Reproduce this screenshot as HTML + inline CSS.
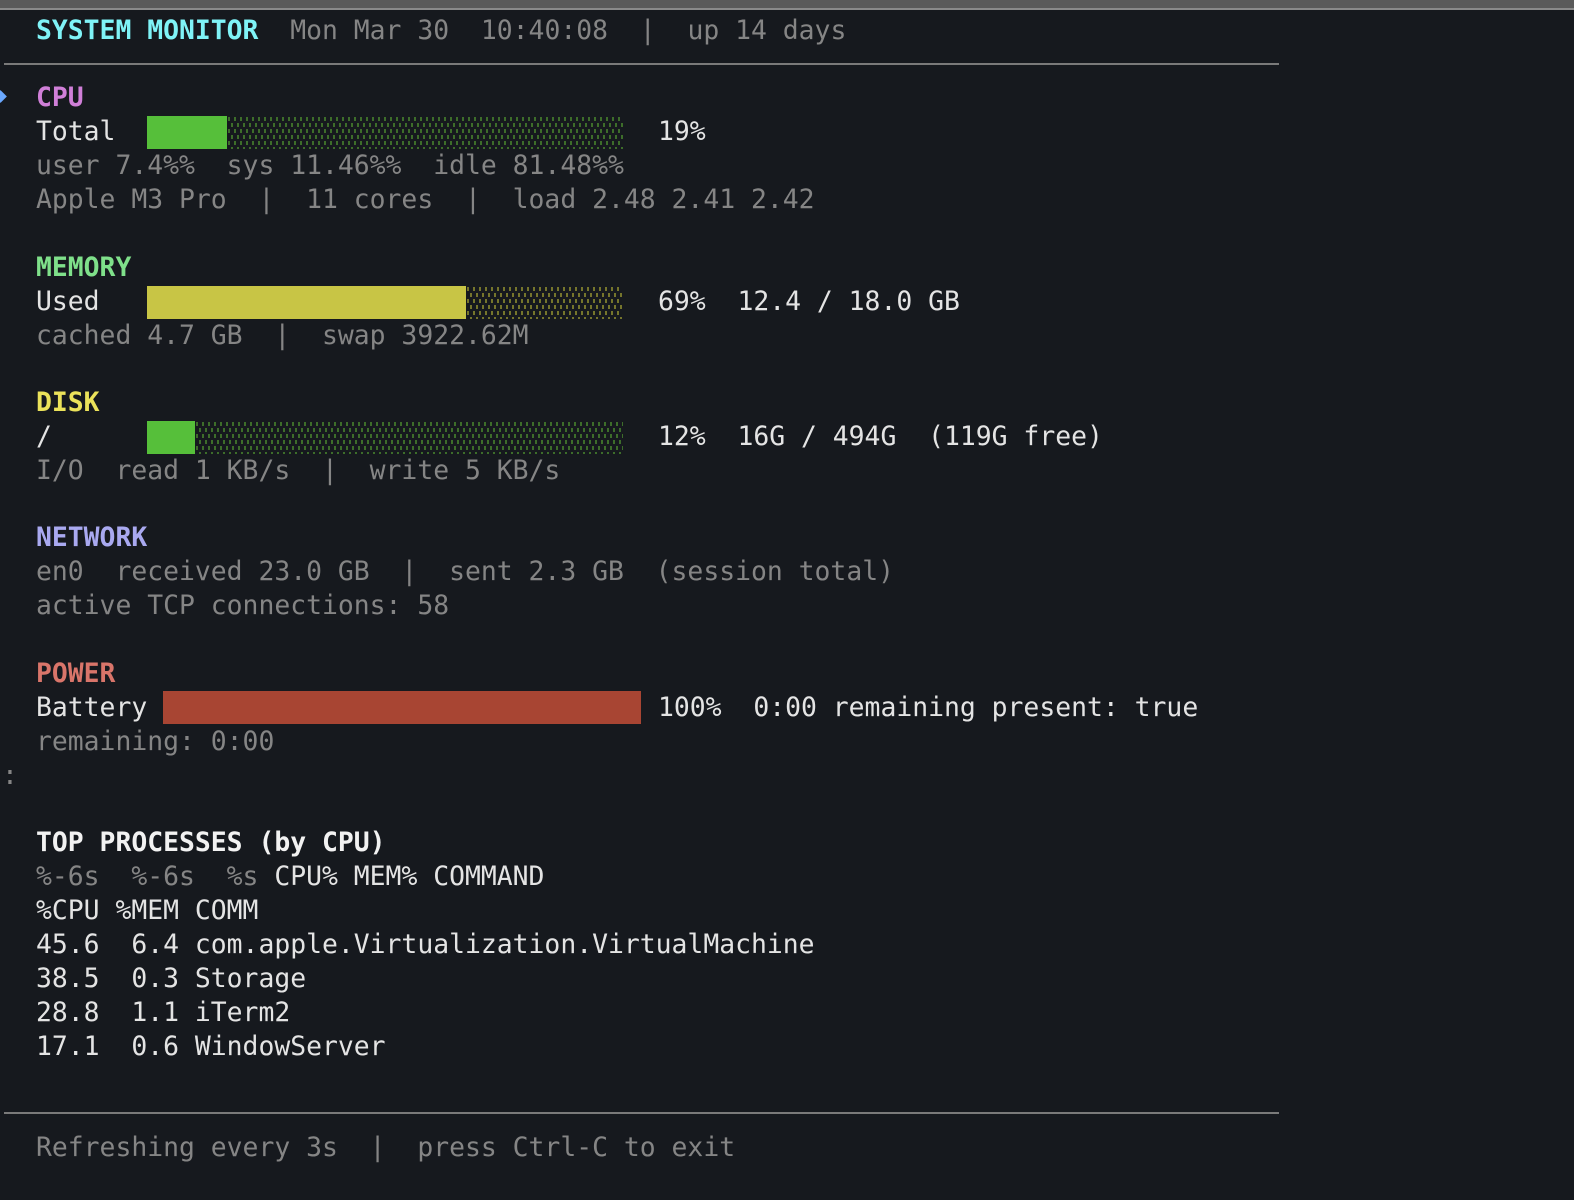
<!DOCTYPE html>
<html><head><meta charset="utf-8"><style>
html,body{margin:0;padding:0;background:#16191e;width:1574px;height:1200px;overflow:hidden;position:relative}
.t{position:absolute;left:36px;font-family:"DejaVu Sans Mono","Liberation Mono",monospace;font-size:26.4px;line-height:34px;white-space:pre;color:#e4e4e4}
.g{color:#858585}
.b{font-weight:bold}
.bar{position:absolute;height:33px}
.dots{position:absolute;height:33px}
</style></head><body>
<div style="position:absolute;left:0;top:0;width:1574px;height:8px;background:#5a5a5a"></div>
<div style="position:absolute;left:0;top:8px;width:1574px;height:2px;background:#8a8a8a"></div>
<div style="position:absolute;left:4px;top:63px;width:1275px;height:2px;background:#7a7a7a"></div>
<div style="position:absolute;left:4px;top:1112px;width:1275px;height:2px;background:#7a7a7a"></div>
<div style="position:absolute;left:-4px;top:92px;width:9px;height:9px;background:#6aa8ff;transform:rotate(45deg)"></div>

<div class="t" style="top:14px"><span class="b" style="color:#7ff3f7">SYSTEM MONITOR</span><span class="g">  Mon Mar 30  10:40:08  |  up 14 days</span></div>

<div class="t b" style="top:81px;color:#d07fd8">CPU</div>
<div class="t" style="top:115px">Total</div>
<svg class="dots" style="left:227px;top:116px;width:396px" width="396" height="33"><defs><pattern id="pg" width="6" height="12" patternUnits="userSpaceOnUse"><rect x="1" y="1" width="2" height="4" fill="#3d6d2a"/><rect x="4" y="7" width="2" height="4" fill="#3d6d2a"/></pattern></defs><rect width="396" height="33" fill="url(#pg)"/></svg>
<div class="bar" style="left:147px;top:116px;width:80px;background:#56bf3a"></div>
<div class="t" style="top:115px;left:658px">19%</div>
<div class="t g" style="top:149px">user 7.4%%  sys 11.46%%  idle 81.48%%</div>
<div class="t g" style="top:183px">Apple M3 Pro  |  11 cores  |  load 2.48 2.41 2.42</div>

<div class="t b" style="top:251px;color:#7fe08a">MEMORY</div>
<div class="t" style="top:285px">Used</div>
<svg class="dots" style="left:466px;top:286px;width:157px" width="157" height="33"><defs><pattern id="py" width="6" height="12" patternUnits="userSpaceOnUse"><rect x="1" y="1" width="2" height="4" fill="#75752c"/><rect x="4" y="7" width="2" height="4" fill="#75752c"/></pattern></defs><rect width="157" height="33" fill="url(#py)"/></svg>
<div class="bar" style="left:147px;top:286px;width:319px;background:#c8c545"></div>
<div class="t" style="top:285px;left:658px">69%  12.4 / 18.0 GB</div>
<div class="t g" style="top:319px">cached 4.7 GB  |  swap 3922.62M</div>

<div class="t b" style="top:386px;color:#ebe25a">DISK</div>
<div class="t" style="top:420px">/</div>
<svg class="dots" style="left:195px;top:421px;width:428px" width="428" height="33"><defs><pattern id="pg2" width="6" height="12" patternUnits="userSpaceOnUse"><rect x="1" y="1" width="2" height="4" fill="#3d6d2a"/><rect x="4" y="7" width="2" height="4" fill="#3d6d2a"/></pattern></defs><rect width="428" height="33" fill="url(#pg2)"/></svg>
<div class="bar" style="left:147px;top:421px;width:48px;background:#56bf3a"></div>
<div class="t" style="top:420px;left:658px">12%  16G / 494G  (119G free)</div>
<div class="t g" style="top:454px">I/O  read 1 KB/s  |  write 5 KB/s</div>

<div class="t b" style="top:521px;color:#a9a9f0">NETWORK</div>
<div class="t g" style="top:555px">en0  received 23.0 GB  |  sent 2.3 GB  (session total)</div>
<div class="t g" style="top:589px">active TCP connections: 58</div>

<div class="t b" style="top:657px;color:#d9756a">POWER</div>
<div class="t" style="top:691px">Battery</div>
<div class="bar" style="left:163px;top:691px;width:478px;background:#a84533"></div>
<div class="t" style="top:691px;left:658px">100%  0:00 remaining present: true</div>
<div class="t g" style="top:725px">remaining: 0:00</div>
<div class="t g" style="top:759px;left:2px">:</div>

<div class="t b" style="top:826px;color:#f2f2f2">TOP PROCESSES (by CPU)</div>
<div class="t" style="top:860px"><span class="g">%-6s  %-6s  %s</span> CPU% MEM% COMMAND</div>
<div class="t" style="top:894px">%CPU %MEM COMM</div>
<div class="t" style="top:928px">45.6  6.4 com.apple.Virtualization.VirtualMachine</div>
<div class="t" style="top:962px">38.5  0.3 Storage</div>
<div class="t" style="top:996px">28.8  1.1 iTerm2</div>
<div class="t" style="top:1030px">17.1  0.6 WindowServer</div>

<div class="t g" style="top:1131px">Refreshing every 3s  |  press Ctrl-C to exit</div>
</body></html>
